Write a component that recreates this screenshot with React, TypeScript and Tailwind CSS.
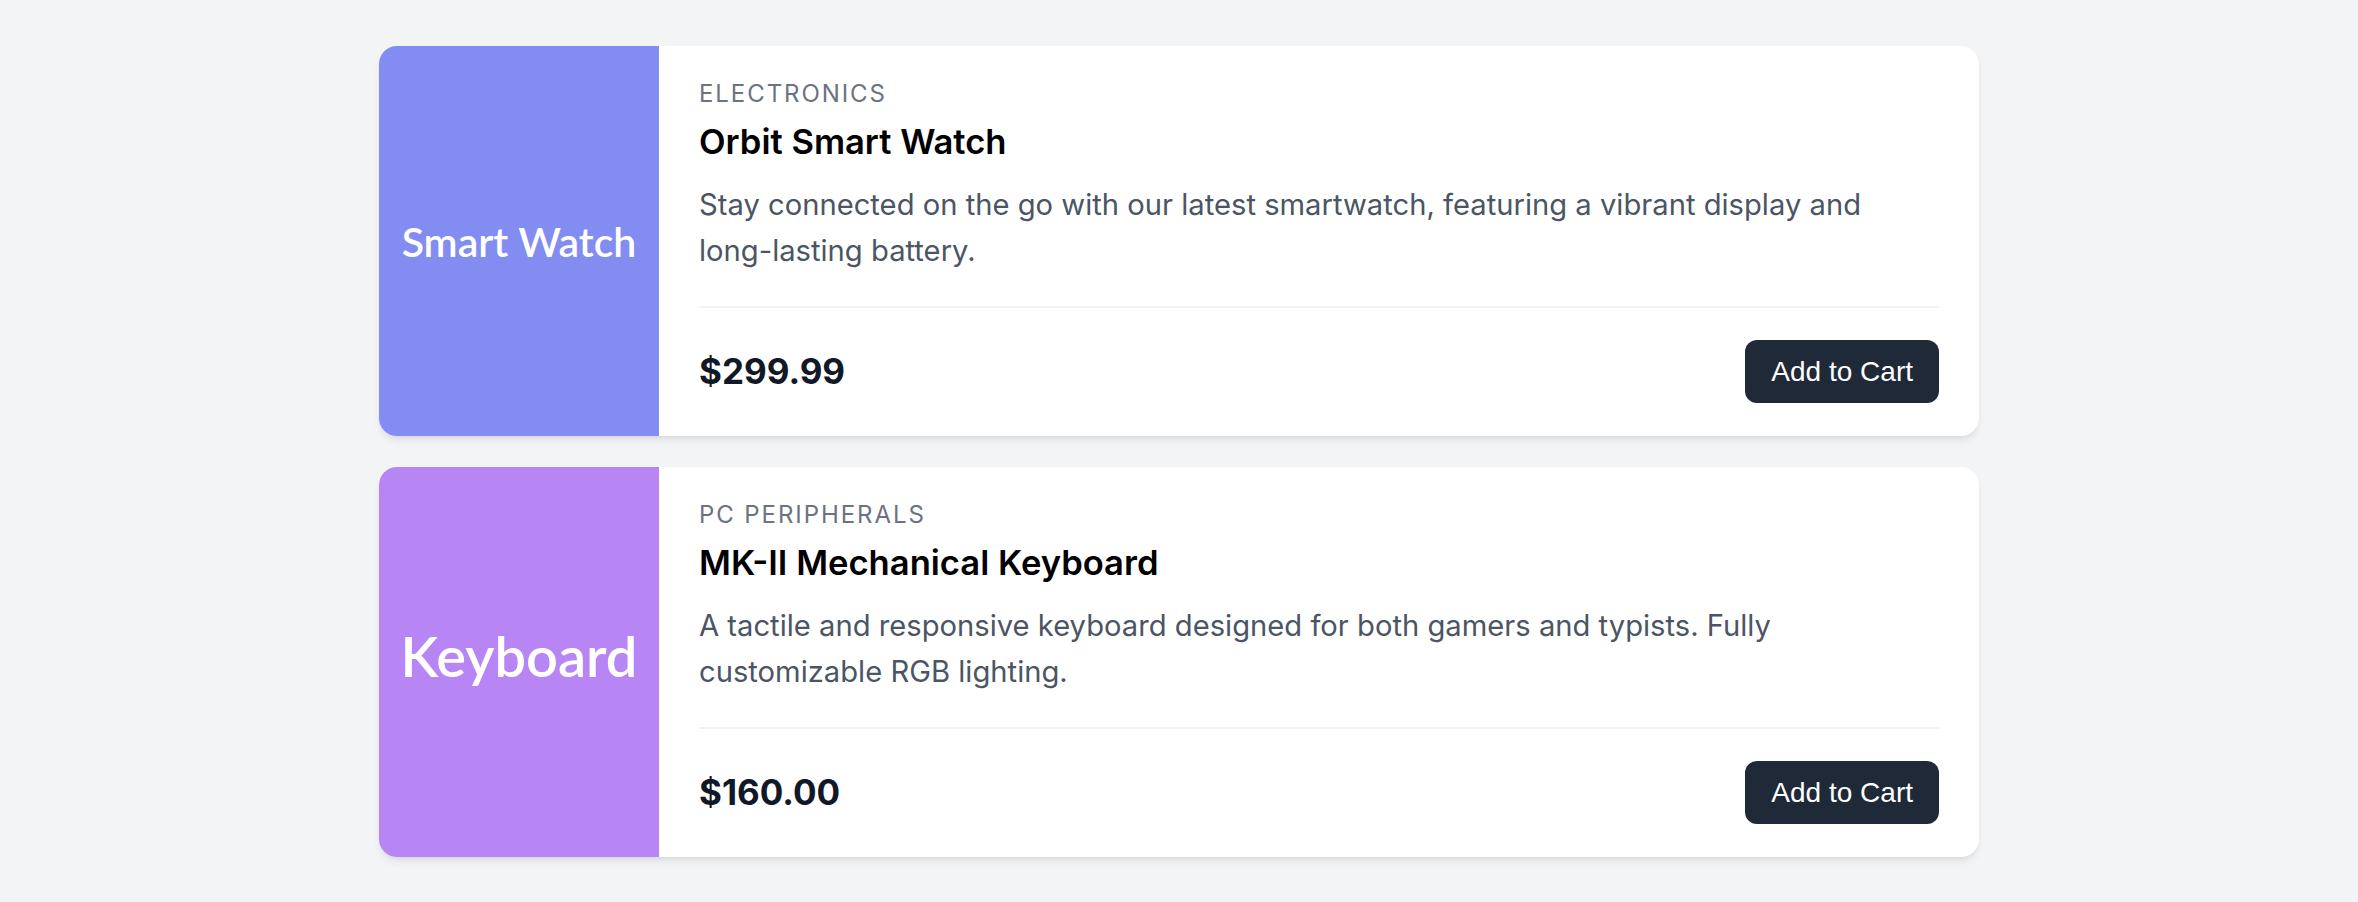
import React from 'react';

interface Product {
  id: number;
  category: string;
  name: string;
  description: string;
  price: string;
  label: string;
  imageClass: string;
  labelClass: string;
}

const products: Product[] = [
  {
    id: 1,
    category: 'Electronics',
    name: 'Orbit Smart Watch',
    description:
      'Stay connected on the go with our latest smartwatch, featuring a vibrant display and long-lasting battery.',
    price: '$299.99',
    label: 'Smart Watch',
    imageClass: 'bg-[#828cf1]',
    labelClass: 'text-[41px]',
  },
  {
    id: 2,
    category: 'PC Peripherals',
    name: 'MK-II Mechanical Keyboard',
    description:
      'A tactile and responsive keyboard designed for both gamers and typists. Fully customizable RGB lighting.',
    price: '$160.00',
    label: 'Keyboard',
    imageClass: 'bg-[#b886f4]',
    labelClass: 'text-[56px] mb-[12px]',
  },
];

const ProductCard: React.FC<{ product: Product }> = ({ product }) => (
  <div className="flex overflow-hidden rounded-[18px] bg-white shadow-[0_6px_10px_-2px_rgba(0,0,0,0.08),0_3px_6px_-3px_rgba(0,0,0,0.08)]">
    {/* placeholder image */}
    <div className={`flex w-[280px] shrink-0 items-center justify-center ${product.imageClass}`}>
      <span
        className={`font-['Lato',sans-serif] font-semibold leading-none text-white ${product.labelClass}`}
      >
        {product.label}
      </span>
    </div>

    <div className="flex-1 px-[40px] pt-[32px] pb-[33px]">
      <p className="text-[24px] leading-[32px] uppercase tracking-[0.08em] text-[#6b7280]">{product.category}</p>
      <h2 className="mt-[9px] text-[34.6px] leading-[44px] font-semibold text-black">{product.name}</h2>
      <p className="mt-[19px] text-[29.2px] leading-[46px] text-[#4b5563]">{product.description}</p>

      <div className="mt-[32px] flex items-center justify-between border-t-2 border-[#f1f2f4] pt-[32px]">
        <span className="text-[35px] font-bold text-[#111827]">{product.price}</span>
        <button className="h-[63px] rounded-[12px] bg-[#1f2937] px-[26px] font-['Liberation_Sans',Arial,sans-serif] text-[28px] text-white">
          Add to Cart
        </button>
      </div>
    </div>
  </div>
);

export default function App() {
  return (
    <div className="min-h-screen bg-[#f3f4f6] pt-[46px] font-['Inter',sans-serif]">
      <div className="mx-auto flex w-[1600px] flex-col gap-[31px]">
        {products.map(p => (
          <ProductCard key={p.id} product={p} />
        ))}
      </div>
    </div>
  );
}
